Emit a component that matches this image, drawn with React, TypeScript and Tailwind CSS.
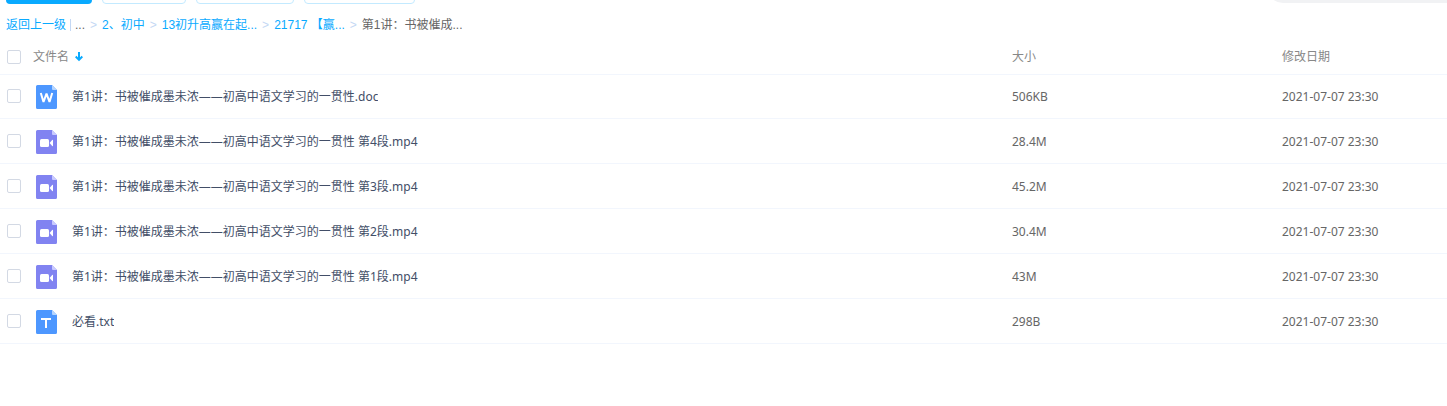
import React, { useState } from 'react';

type FileKind = 'doc' | 'video' | 'txt';

interface FileItem {
  name: string;
  kind: FileKind;
  size: string;
  date: string;
}

const files: FileItem[] = [
  { name: '第1讲：书被催成墨未浓——初高中语文学习的一贯性.doc', kind: 'doc', size: '506KB', date: '2021-07-07 23:30' },
  { name: '第1讲：书被催成墨未浓——初高中语文学习的一贯性 第4段.mp4', kind: 'video', size: '28.4M', date: '2021-07-07 23:30' },
  { name: '第1讲：书被催成墨未浓——初高中语文学习的一贯性 第3段.mp4', kind: 'video', size: '45.2M', date: '2021-07-07 23:30' },
  { name: '第1讲：书被催成墨未浓——初高中语文学习的一贯性 第2段.mp4', kind: 'video', size: '30.4M', date: '2021-07-07 23:30' },
  { name: '第1讲：书被催成墨未浓——初高中语文学习的一贯性 第1段.mp4', kind: 'video', size: '43M', date: '2021-07-07 23:30' },
  { name: '必看.txt', kind: 'txt', size: '298B', date: '2021-07-07 23:30' },
];

const crumbs = ['2、初中', '13初升高赢在起...', '21717 【赢...'];

const FileIcon: React.FC<{ kind: FileKind }> = ({ kind }) => {
  const video = kind === 'video';
  return (
    <svg width="21" height="24" viewBox="0 0 21 24" className="shrink-0" aria-hidden="true">
      <path d="M1.5 0H16l5 5v17.5a1.5 1.5 0 0 1-1.5 1.5h-18A1.5 1.5 0 0 1 0 22.5v-21A1.5 1.5 0 0 1 1.5 0z" fill={video ? '#8183f1' : '#4d97ff'} />
      <path d="M16 0l5 5h-4a1 1 0 0 1-1-1z" fill={video ? '#c9caff' : '#b5d5ff'} />
      {kind === 'doc' && (
        <path d="M4.8 8l2.7 9 3-8.4 3 8.4 2.7-9" fill="none" stroke="#fff" strokeWidth="2" strokeLinejoin="bevel" />
      )}
      {video && (
        <g fill="#fff">
          <rect x="4" y="9" width="9" height="8" rx="1.5" />
          <path d="M13.6 13l2.6-3c.3-.4.8-.2.8.3v5.4c0 .5-.5.7-.8.3z" />
        </g>
      )}
      {kind === 'txt' && <path d="M5 9h10M10 9v9" fill="none" stroke="#fff" strokeWidth="2" />}
    </svg>
  );
};

const CheckBox: React.FC<{ label: string; checked: boolean; onChange: () => void }> = ({ label, checked, onChange }) => (
  <input
    type="checkbox"
    aria-label={label}
    checked={checked}
    onChange={onChange}
    className="block size-3.5 shrink-0 appearance-none rounded-xs border border-[#d3d9e4] bg-white checked:border-[#09aaff] checked:bg-[#09aaff]"
  />
);

const App: React.FC = () => {
  const [selected, setSelected] = useState<number[]>([]);
  const allSelected = selected.length === files.length;

  const toggle = (i: number) =>
    setSelected(selected.includes(i) ? selected.filter((n) => n !== i) : [...selected, i]);

  return (
    <div className="min-h-screen bg-white font-['Noto_Sans','Noto_Sans_CJK_SC',sans-serif] text-xs text-[#424e67]">
      {/* Toolbar, scrolled almost out of view */}
      <div className="flex h-1 items-end justify-between overflow-hidden pl-1.5">
        <div className="flex gap-2.5">
          <button type="button" aria-label="上传" className="h-8 w-[86px] rounded bg-[#09aaff]" />
          <button type="button" aria-label="新建" className="h-8 w-[84px] rounded border border-[#c3eaff]" />
          <button type="button" aria-label="下载" className="h-8 w-[98px] rounded border border-[#c3eaff]" />
          <button type="button" aria-label="设备" className="h-8 w-[111px] rounded border border-[#c3eaff]" />
        </div>
        <input type="search" aria-label="搜索" className="mb-px h-8 w-[180px] rounded-l-full bg-[#f1f2f4] px-4" />
      </div>

      {/* Breadcrumb */}
      <nav className="flex h-10 items-center px-1.5 pt-0.5 font-['Liberation_Sans','Noto_Sans_CJK_SC',sans-serif]">
        <a href="#" className="text-[#09aaff]">返回上一级</a>
        <span className="mx-1 h-3 w-px bg-[#c4d8f4]" />
        <span className="text-[#666666]">...</span>
        {crumbs.map((crumb) => (
          <React.Fragment key={crumb}>
            <span className="mx-[5px] text-[#c4d8f4]">&gt;</span>
            <a href="#" className="text-[#09aaff]">{crumb}</a>
          </React.Fragment>
        ))}
        <span className="mx-[5px] text-[#c4d8f4]">&gt;</span>
        <span className="text-[#666666]">第1讲：书被催成...</span>
      </nav>

      {/* File list */}
      <table className="w-full table-fixed border-separate border-spacing-0 text-left">
        <thead>
          <tr className="h-[31px] text-[#888888]">
            <th className="border-b border-[#f2f6fd] p-0 pb-1 pl-[7px] align-middle font-normal">
              <div className="flex items-center">
                <CheckBox
                  label="全选"
                  checked={allSelected}
                  onChange={() => setSelected(allSelected ? [] : files.map((_, i) => i))}
                />
                <span className="ml-3">文件名</span>
                <svg width="8" height="10" viewBox="0 0 8 10" className="ml-1.5" aria-hidden="true">
                  <path d="M4 0v8M.7 4.5L4 7.9l3.3-3.4" fill="none" stroke="#09aaff" strokeWidth="2" />
                </svg>
              </div>
            </th>
            <th className="w-[270px] border-b border-[#f2f6fd] p-0 pb-1 align-middle font-normal">大小</th>
            <th className="w-[165px] border-b border-[#f2f6fd] p-0 pb-1 align-middle font-normal">修改日期</th>
          </tr>
        </thead>
        <tbody>
          {files.map((file, i) => (
            <tr key={file.name} className="h-[45px] first:h-11 first:*:pb-px">
              <td className="border-b border-[#f2f6fd] p-0 pl-[7px] align-middle">
                <div className="flex items-center">
                  <CheckBox label={file.name} checked={selected.includes(i)} onChange={() => toggle(i)} />
                  <div className="ml-[15px] flex min-w-0 items-center gap-[15px] pt-0.5">
                    <FileIcon kind={file.kind} />
                    <span className="truncate">{file.name}</span>
                  </div>
                </div>
              </td>
              <td className="border-b border-[#f2f6fd] p-0 pt-0.5 align-middle text-[#666666]">{file.size}</td>
              <td className="border-b border-[#f2f6fd] p-0 pt-0.5 align-middle text-[#666666]">{file.date}</td>
            </tr>
          ))}
        </tbody>
      </table>
    </div>
  );
};

export default App;
